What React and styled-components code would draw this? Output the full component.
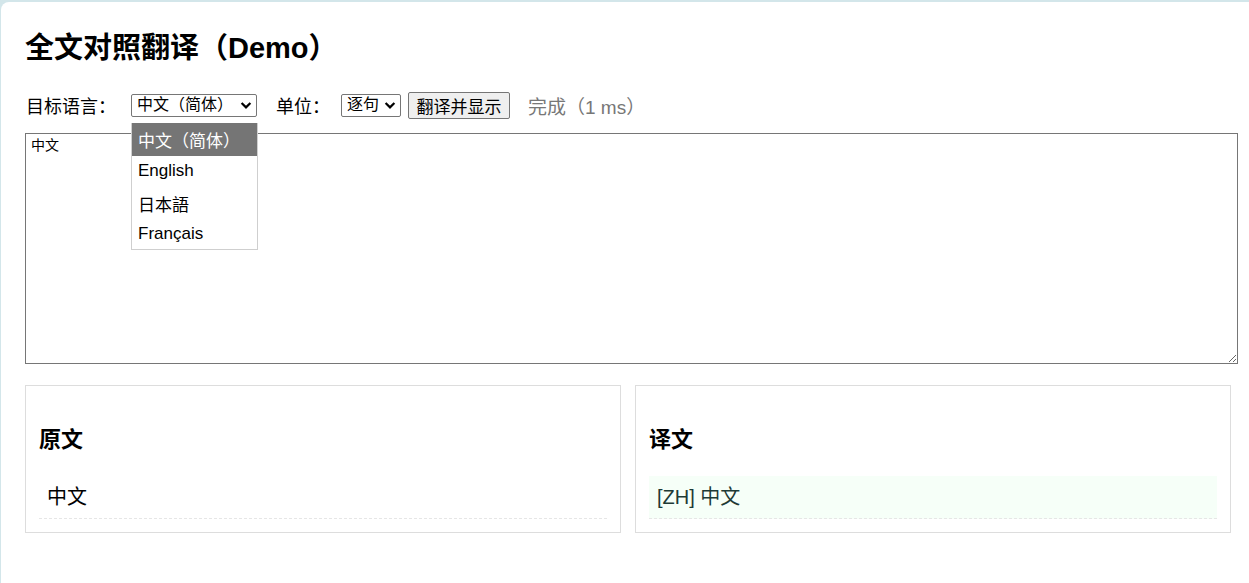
import React from "react";
import styled, { createGlobalStyle } from "styled-components";

const FONT = `"Liberation Sans", Arial, "Noto Sans CJK SC", sans-serif`;

const Global = createGlobalStyle`
  html, body { margin: 0; padding: 0; background: #d3e6ea; overflow: hidden; }
  body { font-family: ${FONT}; color: #000; }
  * { box-sizing: border-box; }
`;

const Card = styled.div`
  margin: 2px 0 0 1px;
  background: #fff;
  border-top-left-radius: 8px;
  min-height: calc(100vh - 2px);
  padding: 26px 24px 40px;
`;

const Content = styled.div`
  width: 1206px;
`;

const Title = styled.h1`
  margin: 0 0 22px;
  font-size: 29px;
  line-height: 40px;
  font-weight: 700;
  letter-spacing: 0;
`;

const Toolbar = styled.div`
  display: flex;
  align-items: center;
  height: 30px;
  font-size: 18px;
  margin-left: 1px;
`;

const Label = styled.span`
  margin-left: ${(p) => p.$ml || 0}px;
  white-space: nowrap;
`;

const SelectWrap = styled.div`
  position: relative;
  margin-left: ${(p) => p.$ml || 0}px;
`;

const SelectBox = styled.div`
  display: flex;
  align-items: center;
  width: ${(p) => p.$w}px;
  height: 23px;
  border: 1px solid #767676;
  border-radius: 2px;
  background: #fff;
  padding: 0 0 0 5px;
  font-size: 16px;
  line-height: 20px;
  position: relative;
`;

const Chevron = styled.svg`
  position: absolute;
  right: 4px;
  top: 6px;
  width: 12px;
  height: 9px;
`;

const Button = styled.button`
  margin-left: 7px;
  height: 27px;
  width: 102px;
  padding: 0;
  font-family: ${FONT};
  font-size: 17px;
  color: #000;
  background: #efefef;
  border: 1px solid #767676;
  border-radius: 2px;
`;

const Status = styled.span`
  margin-left: 18px;
  color: #777;
  font-size: 19px;
`;

const Dropdown = styled.ul`
  position: absolute;
  top: 29px;
  left: 0;
  width: 127px;
  margin: 0;
  padding: 0;
  list-style: none;
  background: #fff;
  border: 1px solid #cfcfcf;
  border-top: none;
  z-index: 5;
  font-size: 17px;
`;

const Option = styled.li`
  height: ${(p) => p.$h}px;
  display: flex;
  align-items: center;
  padding-left: 6px;
  background: ${(p) => (p.$active ? "#757575" : "#fff")};
  color: ${(p) => (p.$active ? "#fff" : "#000")};
`;

const TextArea = styled.textarea`
  display: block;
  margin-top: 13px;
  width: 1213px;
  height: 231px;
  border: 1px solid #767676;
  padding: 1px 5px;
  font-family: "Noto Sans CJK SC", monospace;
  font-size: 14px;
  line-height: 18px;
  color: #000;
  resize: both;
  outline: none;
`;

const Panels = styled.div`
  display: grid;
  grid-template-columns: 596px 596px;
  gap: 14px;
  margin-top: 21px;
`;

const Panel = styled.section`
  border: 1px solid #ddd;
  padding: 12px 13px 13px;
`;

const PanelTitle = styled.h3`
  margin: 29px 0 23px;
  font-size: 22px;
  line-height: 26px;
  font-weight: 700;
`;

const Row = styled.div`
  padding: 8px;
  font-size: 20px;
  line-height: 26px;
  border-bottom: 1px dashed #e6e6e6;
  background: ${(p) => (p.$translated ? "#f6fff8" : "transparent")};
  color: ${(p) => (p.$translated ? "#1e3a36" : "#000")};
`;

const langs = [
  { label: "中文（简体）", h: 33, active: true },
  { label: "English", h: 31 },
  { label: "日本語", h: 33 },
  { label: "Français", h: 29 },
];

function Caret() {
  return (
    <Chevron viewBox="0 0 12 9">
      <path d="M1.6 2 L6 6.4 L10.4 2" fill="none" stroke="#000" strokeWidth="2.2" />
    </Chevron>
  );
}

export default function App() {
  return (
    <>
      <Global />
      <Card>
        <Content>
          <Title>全文对照翻译（Demo）</Title>
          <Toolbar>
            <Label>目标语言：</Label>
            <SelectWrap $ml={15}>
              <SelectBox $w={126}>
                中文（简体）
                <Caret />
              </SelectBox>
              <Dropdown>
                {langs.map((l) => (
                  <Option key={l.label} $h={l.h} $active={l.active}>
                    {l.label}
                  </Option>
                ))}
              </Dropdown>
            </SelectWrap>
            <Label $ml={19}>单位：</Label>
            <SelectWrap $ml={11}>
              <SelectBox $w={60}>
                逐句
                <Caret />
              </SelectBox>
            </SelectWrap>
            <Button>翻译并显示</Button>
            <Status>完成（1 ms）</Status>
          </Toolbar>
          <TextArea defaultValue="中文" />
          <Panels>
            <Panel>
              <PanelTitle>原文</PanelTitle>
              <Row>中文</Row>
            </Panel>
            <Panel>
              <PanelTitle>译文</PanelTitle>
              <Row $translated>[ZH] 中文</Row>
            </Panel>
          </Panels>
        </Content>
      </Card>
    </>
  );
}
